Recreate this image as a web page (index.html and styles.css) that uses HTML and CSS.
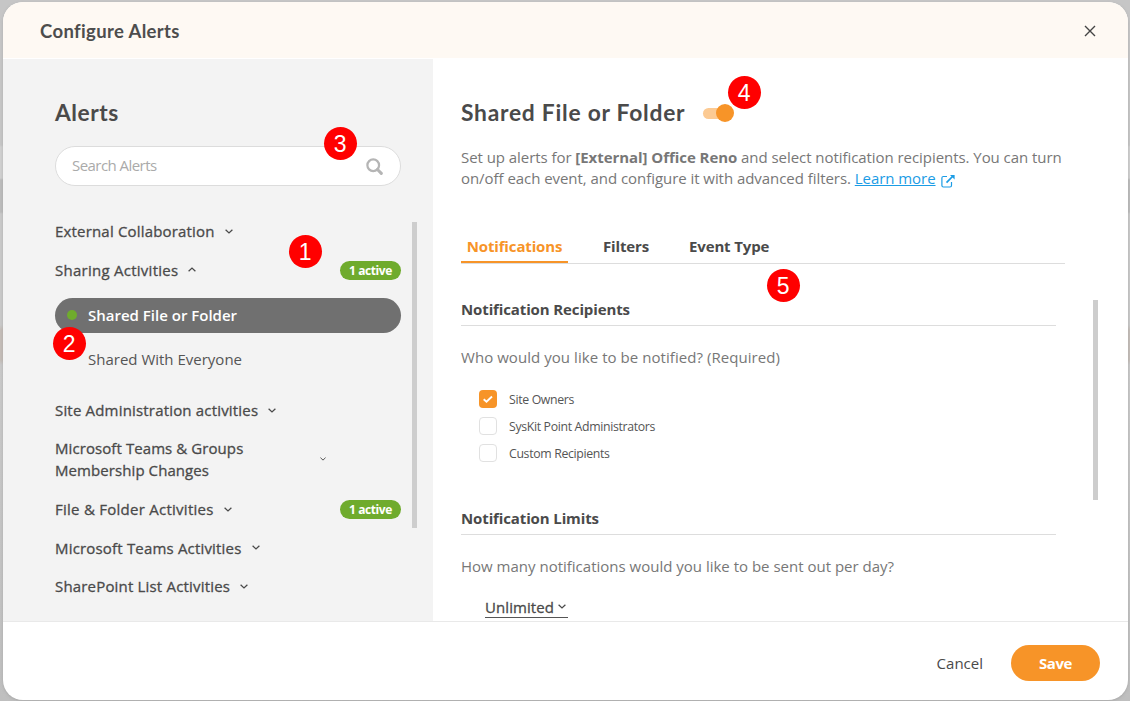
FILE: index.html
```html
<!DOCTYPE html>
<html lang="en">
<head>
<meta charset="utf-8">
<title>Configure Alerts</title>
<link rel="stylesheet" href="styles.css">
</head>
<body>
<svg class="sprite" width="0" height="0">
  <symbol id="chev" viewBox="0 0 8 5"><path d="M.6.7 4 4 7.4.7" fill="none" stroke="currentColor" stroke-width="1.25"/></symbol>
</svg>
<div class="modal">
  <header class="header">
    <h1 class="header-title">Configure Alerts</h1>
    <svg class="close" viewBox="0 0 12 12"><path d="M1 1 11 11M11 1 1 11" stroke="#444" stroke-width="1.4" fill="none"/></svg>
  </header>
  <main class="content">
    <aside class="sidebar">
      <h2 class="heading">Alerts</h2>
      <div class="search">
        <span class="search-text">Search Alerts</span>
        <svg class="search-icon" viewBox="0 0 16 16"><circle cx="6.8" cy="6.8" r="5.5" fill="none" stroke="#b5b5b5" stroke-width="2.1"/><path d="M10.8 10.8 14.4 14.4" stroke="#b5b5b5" stroke-width="2.9" stroke-linecap="round"/></svg>
      </div>
      <div class="scroll-area">
        <nav class="groups">
          <div class="group"><span class="name">External Collaboration</span><svg class="chev"><use href="#chev"/></svg></div>
          <div class="group"><span class="name wide">Sharing Activities</span><svg class="chev up"><use href="#chev"/></svg><span class="badge low">1 active</span></div>
          <div class="sub">
            <div class="item selected"><i class="dot"></i><span>Shared File or Folder</span></div>
            <div class="item"><span>Shared With Everyone</span></div>
          </div>
          <div class="group"><span class="name">Site Administration activities</span><svg class="chev"><use href="#chev"/></svg></div>
          <div class="group tall"><span class="name narrow">Microsoft Teams &amp; Groups<br>Membership Changes</span><svg class="chev small"><use href="#chev"/></svg></div>
          <div class="group"><span class="name wide">File &amp; Folder Activities</span><svg class="chev"><use href="#chev"/></svg><span class="badge">1 active</span></div>
          <div class="group"><span class="name">Microsoft Teams Activities</span><svg class="chev"><use href="#chev"/></svg></div>
          <div class="group"><span class="name">SharePoint List Activities</span><svg class="chev"><use href="#chev"/></svg></div>
        </nav>
        <div class="bar bar-left"></div>
      </div>
    </aside>
    <section class="detail">
      <div class="title-row">
        <h2 class="heading title">Shared File or Folder</h2>
        <span class="toggle"><i class="track"></i><i class="knob"></i></span>
      </div>
      <p class="intro"><span class="line1">Set up alerts for <b>[External] Office Reno</b> and select notification recipients. You can turn</span><br><span class="line2">on/off each event, and configure it with advanced filters. <a class="link">Learn more</a></span><svg class="ext" viewBox="0 0 15 14"><path d="M6 2.5H2.4Q.9 2.5.9 4V11.5Q.9 13 2.4 13H9Q10.500 13 10.500 11.500V8" fill="none" stroke="#1b9ce5" stroke-width="1.2"/><path d="M5.500 8.600 12 2" stroke="#1b9ce5" stroke-width="1.700"/><path d="M9 .9H13.600V5.500Z" fill="#1b9ce5"/></svg></p>
      <div class="tabs">
        <span class="tab active">Notifications</span><span class="tab t2">Filters</span><span class="tab t3">Event Type</span>
      </div>
      <div class="scroll-area">
        <div class="form">
          <h3 class="section">Notification Recipients</h3>
          <p class="question q1">Who would you like to be notified? (Required)</p>
          <div class="checks">
            <div class="check"><i class="box on"><svg viewBox="0 0 18 18"><path d="M4.700 9.200 7.500 11.700 13 6.500" fill="none" stroke="#fff" stroke-width="1.900"/></svg></i><span>Site Owners</span></div>
            <div class="check"><i class="box"></i><span>SysKit Point Administrators</span></div>
            <div class="check"><i class="box"></i><span>Custom Recipients</span></div>
          </div>
          <h3 class="section limits">Notification Limits</h3>
          <p class="question">How many notifications would you like to be sent out per day?</p>
          <div class="select"><span class="name narrow">Unlimited</span><svg class="chev"><use href="#chev"/></svg></div>
        </div>
        <div class="bar bar-right"></div>
      </div>
    </section>
  </main>
  <footer class="footer">
    <span class="cancel">Cancel</span>
    <span class="save">Save</span>
  </footer>
</div>
<div class="callout c1">1</div>
<div class="callout c2">2</div>
<div class="callout c3">3</div>
<div class="callout c4">4</div>
<div class="callout c5">5</div>
</body>
</html>
```

FILE: styles.css
```css
* { box-sizing: border-box; }
body { margin: 0; width: 1130px; height: 701px; padding: 2px 2px 2px 3px; overflow: hidden; position: relative; background: linear-gradient(#c6c6c6, #c6c6c6 145px, #d0d0d0 147px, #d0d0d0 178px, #bcbcbc 180px, #bcbcbc 212px, #c9c9c9 214px, #c9c9c9 325px, #c4bdb8 330px, #c4bdb8 360px, #c9c9c9 365px, #bfbfbf); font-family: "Open Sans", "Noto Sans", sans-serif; font-size: 15px; color: #4a4a4a; }
h1, h2, h3, p { margin: 0; }
svg { flex: none; }
.sprite { display: none; }
.modal { width: 1125px; height: 698px; border-radius: 20px; overflow: hidden; background: #fff; display: flex; flex-direction: column; box-shadow: 0 1px 3px #8886; }
.header { height: 56px; background: #fef9f3; display: flex; align-items: center; justify-content: space-between; padding: 1px 32px 0 37px; flex: none; }
.header-title { font: 700 18.500px/24px Lato, sans-serif; letter-spacing: .36px; color: #4d4d4d; }
.close { width: 12px; height: 12px; }
.content { height: 563px; padding-top: 1px; display: flex; flex: none; }
.sidebar { width: 430px; background: #f3f3f3; padding: 37px 16px 0 52px; flex: none; }
.heading { font: 700 22.800px/32px Lato, sans-serif; letter-spacing: .5px; color: #4a4a4a; }
.title { letter-spacing: .75px; white-space: nowrap; }
.search { width: 346px; height: 40px; margin-top: 18px; border: 1px solid #dcdcdc; border-radius: 20px; background: #fff; display: flex; align-items: center; justify-content: space-between; padding: 0 17px 0 16px; color: #aaa; }
.search-text { letter-spacing: -.55px; padding-bottom: 2px; }
.search-icon { width: 17px; height: 17px; }
.scroll-area { display: flex; justify-content: space-between; }
.sidebar .scroll-area { margin-top: 26px; }
.groups { width: 346px; }
.group { height: 38.500px; display: flex; align-items: center; line-height: 22px; white-space: nowrap; }
.name { -webkit-text-stroke: .3px #4a4a4a; letter-spacing: .18px; }
.wide { letter-spacing: .26px; }
.narrow { letter-spacing: .08px; }
.chev { width: 8px; height: 5px; margin-left: 10px; }
.chev.up { transform: rotate(180deg); }
.chev.small { width: 6px; height: 4px; margin-left: 77px; }
.group.tall { height: 60.500px; padding-bottom: 2px; }
.badge { margin-left: auto; width: 61px; height: 19px; border-radius: 10px; background: #6fab2d; color: #fff; font-size: 12px; font-weight: 700; line-height: 19px; text-align: center; letter-spacing: -.4px; }
.low { margin-top: 2px; }
.sub { padding: 9px 0 14px; }
.item { height: 35px; border-radius: 18px; display: flex; align-items: center; padding: 0 0 2px 33px; color: #555; white-space: nowrap; }
.selected { background: #707070; color: #fff; font-weight: 600; padding: 0 0 1px 12px; margin-bottom: 9px; }
.dot { width: 10px; height: 10px; border-radius: 5px; background: #6fab2d; margin-right: 11px; }
.bar { background: #cdcdcd; width: 5px; flex: none; }
.bar-left { height: 306px; margin-top: 10px; }
.detail { width: 695px; padding: 37px 30px 0 28px; overflow: hidden; }
.title-row { display: flex; align-items: center; height: 32px; }
.toggle { display: flex; align-items: center; margin-left: 18px; padding-top: 2px; }
.track { width: 22px; height: 11px; border-radius: 6px; background: #fcca93; }
.knob { width: 18px; height: 18px; border-radius: 9px; background: #f79428; margin-left: -9px; }
.intro { margin-top: 19px; line-height: 21px; color: #777; white-space: nowrap; }
.line1 { letter-spacing: -.055px; }
.line2 { letter-spacing: -.05px; }
.link { color: #1b9ce5; text-decoration: underline; }
.ext { width: 15px; height: 14px; margin-left: 5px; vertical-align: -4px; }
.tabs { width: 604px; height: 36px; margin-top: 39px; border-bottom: 1px solid #ddd; display: flex; font-weight: 700; letter-spacing: -.14px; line-height: 36px; white-space: nowrap; }
.tab { height: 35px; }
.active { width: 107px; text-align: center; color: #f79428; border-bottom: 2px solid #f79428; }
.t2 { margin-left: 35px; width: 45px; }
.t3 { margin-left: 41px; }
.detail .scroll-area { margin-top: 33px; }
.form { width: 595px; }
.section { font-size: 15px; font-weight: 700; line-height: 24px; height: 29px; border-bottom: 1px solid #ddd; letter-spacing: -.12px; }
.question { color: #777; line-height: 22px; margin-top: 20px; white-space: nowrap; }
.q1 { letter-spacing: .055px; }
.checks { margin: 22px 0 0 18px; display: flex; flex-direction: column; gap: 9px; }
.check { display: flex; align-items: center; height: 18px; font-size: 12.300px; letter-spacing: -.34px; color: #555; }
.box { width: 18px; height: 18px; border: 1px solid #e1e1e1; border-radius: 4px; margin-right: 12px; }
.on { background: #f79428; border: 0; }
.on svg { display: block; }
.limits { margin-top: 44px; }
.select { width: 83px; height: 22px; margin: 19px 0 0 24px; border-bottom: 1px solid #555; display: flex; align-items: center; white-space: nowrap; }
.select .chev { margin-left: 4px; }
.bar-right { height: 200px; margin-top: 3px; }
.footer { border-top: 1px solid #e9e9e9; height: 79px; display: flex; align-items: center; justify-content: flex-end; padding: 3px 28px 0 0; }
.cancel { margin-right: 28px; }
.save { width: 89px; height: 36px; border-radius: 18px; background: #f79428; color: #fff; font-weight: 700; text-align: center; line-height: 36px; letter-spacing: -.4px; }
.callout { position: absolute; width: 33.500px; height: 33.500px; border-radius: 50%; background: #f00; color: #fff; font: 23px/34px "Liberation Sans", Arial, sans-serif; text-align: center; }
.c1 { left: 288.500px; top: 234.500px; }
.c2 { left: 52.500px; top: 326.500px; }
.c3 { left: 323.500px; top: 126.500px; }
.c4 { left: 727.500px; top: 75.500px; }
.c5 { left: 766.500px; top: 268.500px; }
```
